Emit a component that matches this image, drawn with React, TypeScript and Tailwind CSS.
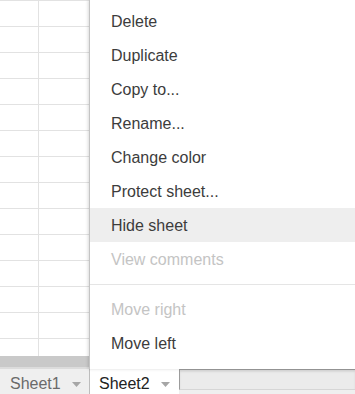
import { JSX } from "react";

const ITEMS: { label: string; disabled?: boolean; active?: boolean; sub?: boolean }[] = [
  { label: "Delete" },
  { label: "Duplicate" },
  { label: "Copy to..." },
  { label: "Rename..." },
  { label: "Change color", sub: true },
  { label: "Protect sheet..." },
  { label: "Hide sheet", active: true },
  { label: "View comments", disabled: true },
];

const ITEMS_AFTER = [{ label: "Move right", disabled: true }, { label: "Move left" }];

const Caret = (): JSX.Element => (
  <svg width="9" height="5" viewBox="0 0 9 5">
    <path d="M0 0h9L4.5 5z" fill="#a6a6a6" />
  </svg>
);

const MenuItem = ({
  label,
  disabled,
  active,
  sub,
}: {
  label: string;
  disabled?: boolean;
  active?: boolean;
  sub?: boolean;
}): JSX.Element => (
  <div
    className={`flex h-[34px] items-center justify-between pl-[21px] pr-[14px] pt-[2px] text-[16px] ${
      disabled ? "text-[#c4c4c4]" : "text-[#3c3c3c]"
    } ${active ? "bg-[#eeeeee]" : ""}`}
  >
    <span>{label}</span>
    {sub && (
      <svg width="5" height="7" viewBox="0 0 5 7">
        <path d="M0 0L5 3.5 0 7z" fill="#7a7a7a" />
      </svg>
    )}
  </div>
);

const Tab = ({ name, active }: { name: string; active?: boolean }): JSX.Element => (
  <div
    className={`flex h-[25px] items-start gap-[11px] pt-[5px] text-[16px] leading-[20px] ${
      active
        ? "w-[90px] border-l border-[#bdbdbd] bg-white pl-[9px] text-[#222222]"
        : "w-[89px] pl-[10px] text-[#6a6a6a]"
    }`}
  >
    <span>{name}</span>
    <span className="pt-[8px]">
      <Caret />
    </span>
  </div>
);

const App = (): JSX.Element => {
  return (
    <div className="relative flex h-[394px] w-[355px] flex-col overflow-hidden bg-white font-['Liberation_Sans',Arial,sans-serif]">
      {/* grid */}
      <div className="h-[356px] overflow-hidden">
        {Array.from({ length: 14 }).map((_, i) => (
          <div key={i} className="flex h-[26px] border-t border-[#e2e2e2]">
            <div className="w-[39px] border-r border-[#e2e2e2]" />
            <div className="flex-1" />
          </div>
        ))}
      </div>
      {/* horizontal scrollbar */}
      <div className="h-[11px] bg-[#c9c9c9]" />
      <div className="h-[2px] bg-[#dcdcdc]" />
      {/* sheet tabs */}
      <div className="flex h-[25px] items-start bg-[#efefef]">
        <Tab name="Sheet1" />
        <Tab name="Sheet2" active />
        <div className="h-[21px] flex-1 border-b border-l border-t border-[#9c9c9c] border-b-[#d6d6d6] bg-[#ebebeb] shadow-[inset_0_2px_2px_rgba(0,0,0,0.08)]" />
      </div>

      {/* context menu */}
      <div className="absolute left-[89px] top-0 h-[369px] w-[290px] border-l border-[#c4c4c4] bg-white pt-[4px] shadow-[-1px_0_3px_rgba(0,0,0,0.15)]">
        {ITEMS.map((it) => (
          <MenuItem key={it.label} {...it} />
        ))}
        <div className="flex h-[16px] items-center">
          <div className="h-px w-full bg-[#e5e5e5]" />
        </div>
        {ITEMS_AFTER.map((it) => (
          <MenuItem key={it.label} {...it} />
        ))}
      </div>
    </div>
  );
};

export default App;
